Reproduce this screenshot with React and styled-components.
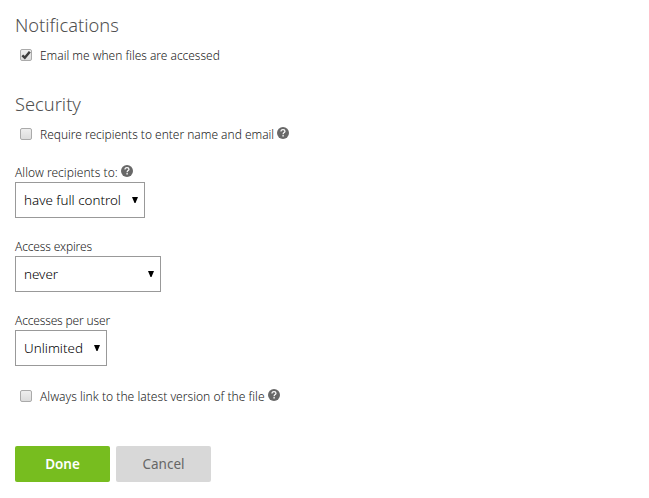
import React, { useState } from "react";
import styled, { createGlobalStyle } from "styled-components";

const GlobalStyle = createGlobalStyle`
  * {
    box-sizing: border-box;
  }
  body {
    margin: 0;
    background: #fff;
    color: #222;
    font-family: "Noto Sans", "Open Sans", sans-serif;
    font-size: 12px;
    font-weight: 300;
  }
`;

const HelpIcon = () => (
  <Help viewBox="0 0 12 12" role="img" aria-label="Help">
    <circle cx="6" cy="6" r="6" fill="#686868" />
    <path
      d="M4 4.4C4 3.2 4.9 2.6 6 2.6s2 .7 2 1.7C8 5.6 6.1 5.6 6.1 7.2"
      fill="none"
      stroke="#fff"
      strokeWidth="1.2"
    />
    <rect x="5.4" y="8.1" width="1.4" height="1.4" fill="#fff" />
  </Help>
);

const CheckOption = ({ label, checked = false, help, size }) => {
  const [on, setOn] = useState(checked);
  return (
    <CheckRow>
      <Checkbox
        type="checkbox"
        checked={on}
        onChange={(e) => setOn(e.target.checked)}
      />
      <Tick viewBox="0 0 12 12" $on={on}>
        <path d="M2.3 6.4l2.5 2.3L9.8 2.8" fill="none" stroke="#3c3c3c" strokeWidth="2.5" />
      </Tick>
      <Text $size={size}>{label}</Text>
      {help && <HelpIcon />}
    </CheckRow>
  );
};

const SelectField = ({ label, help, options, width, spacing }) => (
  <Field>
    <FieldLabel>
      <Text $spacing={spacing}>{label}</Text>
      {help && <HelpIcon />}
    </FieldLabel>
    <SelectBox $width={width}>
      <Select aria-label={label}>
        {options.map((option) => (
          <option key={option}>{option}</option>
        ))}
      </Select>
      <Arrow viewBox="0 0 6 6">
        <path d="M0 0h6L3.5 6h-1z" />
      </Arrow>
    </SelectBox>
  </Field>
);

const App = () => {
  return (
    <Wrapper>
      <GlobalStyle />
      <section>
        <Title>Notifications</Title>
        <CheckOption label="Email me when files are accessed" checked size={11.95} />
      </section>
      <Section>
        <Title>Security</Title>
        <CheckOption
          label="Require recipients to enter name and email"
          help
          size={11.95}
        />
        <Fields>
          <SelectField
            label="Allow recipients to:"
            help
            options={["have full control"]}
            width={130}
            spacing="0.04px"
          />
          <SelectField
            label="Access expires"
            options={["never"]}
            width={146}
            spacing="-0.14px"
          />
          <SelectField
            label="Accesses per user"
            options={["Unlimited"]}
            width={92}
            spacing="-0.16px"
          />
        </Fields>
        <CheckOption
          label="Always link to the latest version of the file"
          help
          size={12.08}
        />
      </Section>
      <Actions>
        <Button $primary>Done</Button>
        <Button>Cancel</Button>
      </Actions>
    </Wrapper>
  );
};

const Wrapper = styled.main`
  padding: 11px 15px 16px;
`;

const Section = styled.section`
  margin-top: 25px;
`;

const Title = styled.h2`
  margin: 0 0 6px;
  height: 28px;
  font-size: 18.3px;
  line-height: 28px;
  font-weight: 300;
  color: #505050;
`;

const CheckRow = styled.label`
  display: grid;
  grid-template-columns: 12px auto auto;
  justify-content: start;
  align-items: center;
  height: 20px;
  padding-left: 5px;
`;

const Checkbox = styled.input`
  appearance: none;
  grid-area: 1 / 1;
  width: 12px;
  height: 12px;
  margin: 0;
  border: 1px solid #aaa;
  border-radius: 2px;
  background: linear-gradient(#eee, #dcdcdc);
`;

const Tick = styled.svg`
  grid-area: 1 / 1;
  width: 12px;
  height: 12px;
  z-index: 1;
  pointer-events: none;
  visibility: ${(props) => (props.$on ? "visible" : "hidden")};
`;

const Text = styled.span`
  white-space: nowrap;
  font-size: ${(props) => props.$size || 12}px;
  letter-spacing: ${(props) => props.$spacing || "normal"};

  ${CheckRow} & {
    margin-left: 8px;
  }
`;

const Help = styled.svg`
  width: 12px;
  height: 12px;
  margin: 0 0 3px 3px;
`;

const Fields = styled.div`
  display: grid;
  gap: 18px;
  margin: 18px 0 20px;
`;

const Field = styled.div``;

const FieldLabel = styled.div`
  display: flex;
  align-items: center;
  height: 20px;
`;

const SelectBox = styled.div`
  display: grid;
  align-items: center;
  width: ${(props) => props.$width}px;
  height: 36px;
`;

const Select = styled.select`
  appearance: none;
  grid-area: 1 / 1;
  width: 100%;
  height: 100%;
  padding: 0 0 0 8px;
  border: 1px solid #999;
  border-radius: 0;
  background: #fff;
  color: #000;
  font: inherit;
  font-size: 13.4px;
`;

const Arrow = styled.svg`
  grid-area: 1 / 1;
  justify-self: end;
  width: 6px;
  height: 6px;
  margin-right: 7px;
  z-index: 1;
  pointer-events: none;
`;

const Actions = styled.div`
  display: flex;
  gap: 6px;
  margin-top: 40px;
`;

const Button = styled.button`
  width: 95px;
  height: 36px;
  padding: 0;
  border: 0;
  border-radius: 2px;
  background: ${(props) => (props.$primary ? "#77bd1f" : "#d8d8d8")};
  color: ${(props) => (props.$primary ? "#fff" : "#666")};
  font: inherit;
  font-size: 13.5px;
  font-weight: ${(props) => (props.$primary ? 600 : 400)};
`;

export default App;
